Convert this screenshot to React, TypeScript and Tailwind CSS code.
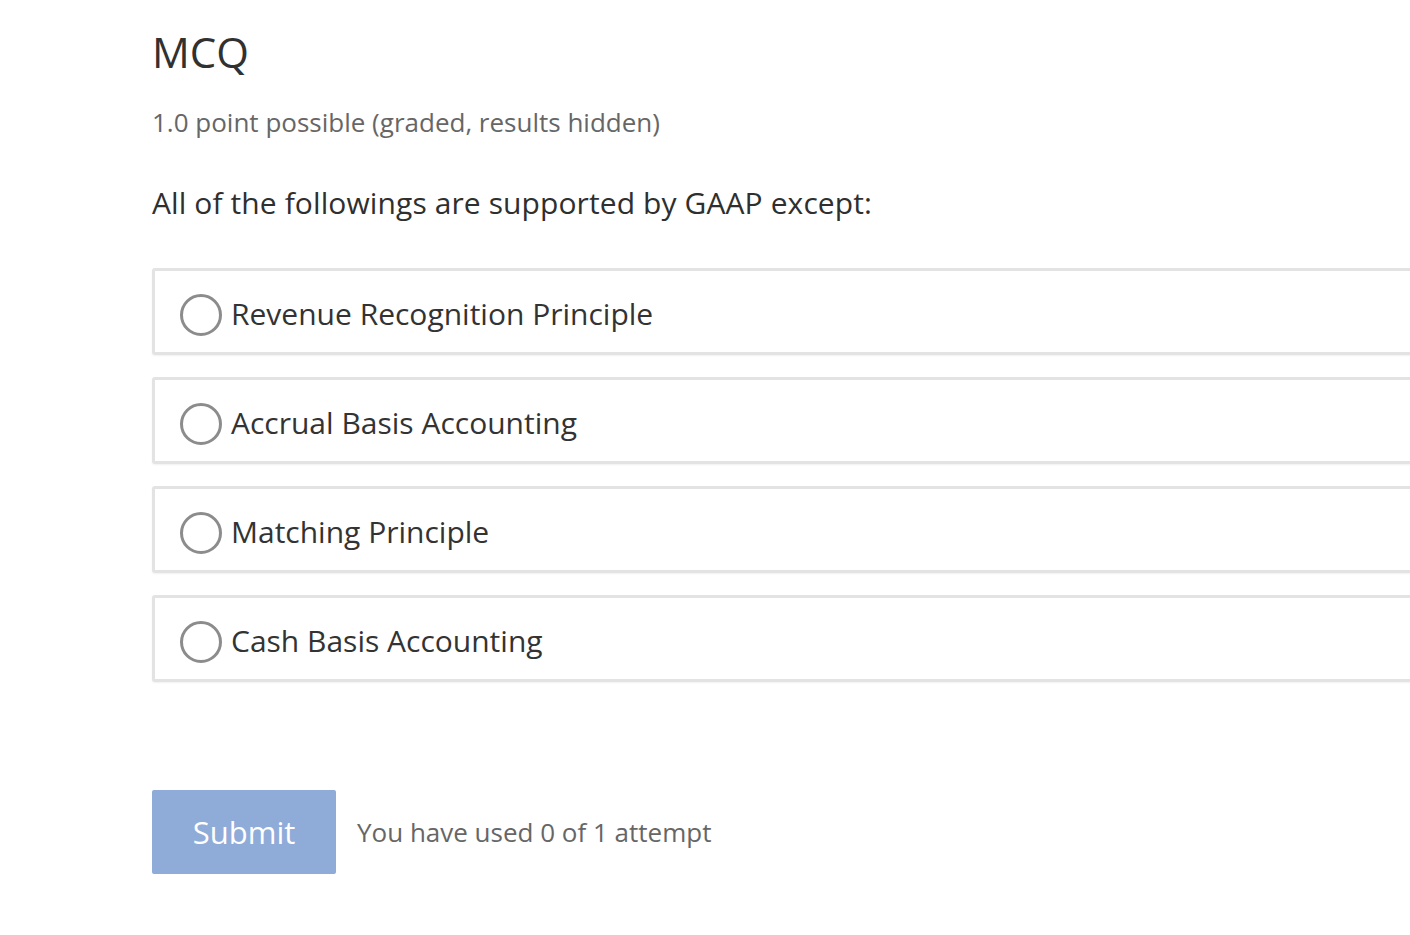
const options = [
  "Revenue Recognition Principle",
  "Accrual Basis Accounting",
  "Matching Principle",
  "Cash Basis Accounting",
];

function Radio() {
  return (
    <span className="flex h-[44px] w-[44px] shrink-0 items-center justify-center pt-[4px]">
      <span className="h-[42px] w-[42px] rounded-full border-[3px] border-[#8c8c8c] bg-white" />
    </span>
  );
}

export default function App() {
  return (
    <div
      className="min-h-[935px] w-[1410px] overflow-hidden bg-white pl-[152px] text-[#333]"
      style={{ fontFamily: '"Open Sans", "Noto Sans", sans-serif' }}
    >
      <h2 className="pt-[22px] text-[42px] leading-[60px] font-normal text-[#313131]">MCQ</h2>
      <div className="mt-[25px] text-[26px] leading-[30px] text-[#666]">
        1.0 point possible (graded, results hidden)
      </div>
      <p className="mt-[46px] text-[30px] leading-[40px] tracking-[0.1px] text-[#2f2f2f]">
        All of the followings are supported by GAAP except:
      </p>

      <div className="mt-[45px] flex w-[1300px] flex-col gap-[22px]">
        {options.map((label) => (
          <label
            key={label}
            className="flex h-[87px] items-center rounded-[3px] border-[3px] border-[#e3e3e3] bg-white pl-[24px] pt-[3px] shadow-[0_1px_2px_rgba(0,0,0,0.06)]"
          >
            <Radio />
            <span className="ml-[8px] text-[30px] text-[#333]">{label}</span>
          </label>
        ))}
      </div>

      <div className="mt-[108px] flex items-center gap-[21px]">
        <button className="h-[84px] w-[184px] rounded-[2px] bg-[#8fabd8] text-[31px] text-white">
          Submit
        </button>
        <span className="text-[26px] text-[#666]">You have used 0 of 1 attempt</span>
      </div>
    </div>
  );
}
